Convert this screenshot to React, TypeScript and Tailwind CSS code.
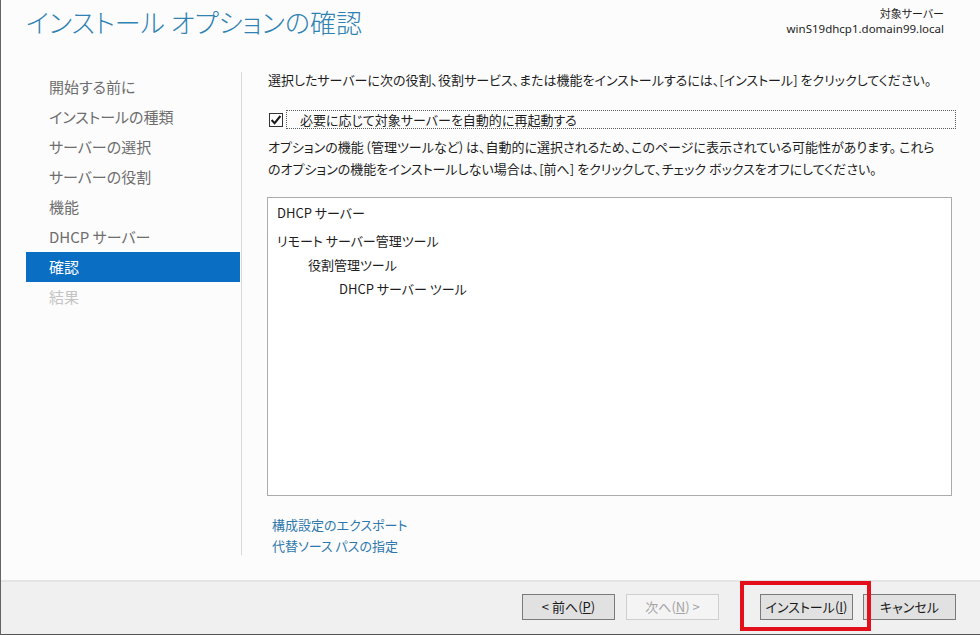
import React from "react";

const jp = "font-['Noto_Sans_CJK_JP','Noto_Sans',sans-serif] [font-feature-settings:'palt']";

function NavItem({ label, state }: { label: string; state: "done" | "active" | "disabled" }) {
  const cls =
    state === "active"
      ? "bg-[#0a6fc2] text-white"
      : state === "disabled"
      ? "text-[#c4c4c4]"
      : "text-[#6e6e6e]";
  return (
    <div className={`h-[30px] flex items-center pl-[23px] text-[15px] ${cls}`}>{label}</div>
  );
}

function Btn({ children, disabled }: { children: React.ReactNode; disabled?: boolean }) {
  return (
    <div
      className={`w-[93px] h-[26px] flex items-center justify-center text-[13px] border ${
        disabled
          ? "border-[#cfcfcf] bg-[#f4f4f4] text-[#a3a3a3]"
          : "border-[#7a7a7a] bg-[#e1e1e1] text-[#1a1a1a]"
      }`}
    >
      {children}
    </div>
  );
}

export default function App() {
  return (
    <div className={`w-[980px] h-[635px] flex flex-col bg-[#fcfcfc] border-l border-[#646464] overflow-hidden ${jp}`}>
      {/* header */}
      <div className="h-[70px] flex justify-between shrink-0">
        <div className="pl-[25px] pt-[3px] text-[26px] leading-[38px] font-light text-[#2f82b2] whitespace-nowrap">
          インストール オプションの確認
        </div>
        <div className="pr-[36px] pt-[5px] flex flex-col items-end text-[11px] leading-[16px] text-[#1e1e1e]">
          <div>対象サーバー</div>
          <div className="font-['Noto_Sans',sans-serif] text-[11.5px]">winS19dhcp1.domain99.local</div>
        </div>
      </div>

      {/* body */}
      <div className="flex flex-1 min-h-0">
        <div className="w-[214px] ml-[25px] mt-[2px] shrink-0 flex flex-col">
          <NavItem label="開始する前に" state="done" />
          <NavItem label="インストールの種類" state="done" />
          <NavItem label="サーバーの選択" state="done" />
          <NavItem label="サーバーの役割" state="done" />
          <NavItem label="機能" state="done" />
          <NavItem label="DHCP サーバー" state="done" />
          <NavItem label="確認" state="active" />
          <NavItem label="結果" state="disabled" />
        </div>
        <div className="w-px ml-px mt-[2px] h-[483px] bg-[#d9d9d9] shrink-0" />
        <div className="flex-1 pl-[26px] pr-[24px] flex flex-col text-[13px] text-[#1e1e1e] whitespace-nowrap">
          <div className="leading-[20px]">
            選択したサーバーに次の役割、役割サービス、または機能をインストールするには、[インストール] をクリックしてください。
          </div>
          <div className="mt-[20px] flex items-center h-[19px]">
            <div className="w-[14px] h-[14px] ml-px border border-[#333] bg-white flex items-center justify-center shrink-0">
              <svg width="12" height="12" viewBox="0 0 12 12">
                <path d="M1.6 6 L4.6 9.2 L10.4 2" fill="none" stroke="#1a1a1a" strokeWidth="2" />
              </svg>
            </div>
            <div className="ml-[3px] flex-1 h-[19px] border border-dotted border-[#5a5a5a] pl-[13px] flex items-center text-[13px]">
              必要に応じて対象サーバーを自動的に再起動する
            </div>
          </div>
          <div className="mt-[7px] leading-[22px]">
            オプションの機能 (管理ツールなど) は、自動的に選択されるため、このページに表示されている可能性があります。 これら
            <br />
            のオプションの機能をインストールしない場合は、[前へ] をクリックして、チェック ボックスをオフにしてください。
          </div>
          <div className="mt-[17px] -ml-px w-[685px] h-[299px] border border-[#ababab] bg-white pt-[3px] pl-[9px] text-[13px] leading-[24px] shrink-0">
            <div>DHCP サーバー</div>
            <div className="mt-[4px]">リモート サーバー管理ツール</div>
            <div className="pl-[31px]">役割管理ツール</div>
            <div className="pl-[62px]">DHCP サーバー ツール</div>
          </div>
          <div className="mt-[18px] pl-[4px] leading-[21px] text-[#2e78ac]">
            <div>構成設定のエクスポート</div>
            <div>代替ソース パスの指定</div>
          </div>
        </div>
      </div>

      {/* footer */}
      <div className="h-[55px] shrink-0 border-t-2 border-[#e4e4e4] bg-[#f0f0f0] border-b border-b-[#555]">
        <div className="flex justify-end pr-[24px] pt-[12px]">
          <Btn>
            &lt; 前へ(<span className="underline">P</span>)
          </Btn>
          <div className="ml-[11px]">
            <Btn disabled>
              次へ(<span className="underline">N</span>) &gt;
            </Btn>
          </div>
          <div className="ml-[41px] relative">
            <Btn>
              インストール(<span className="underline">I</span>)
            </Btn>
            <div className="absolute left-[-20px] top-[-13px] w-[131px] h-[50px] border-[4px] border-[#e3101b]" />
          </div>
          <div className="ml-[10px]">
            <Btn>キャンセル</Btn>
          </div>
        </div>
      </div>
    </div>
  );
}
